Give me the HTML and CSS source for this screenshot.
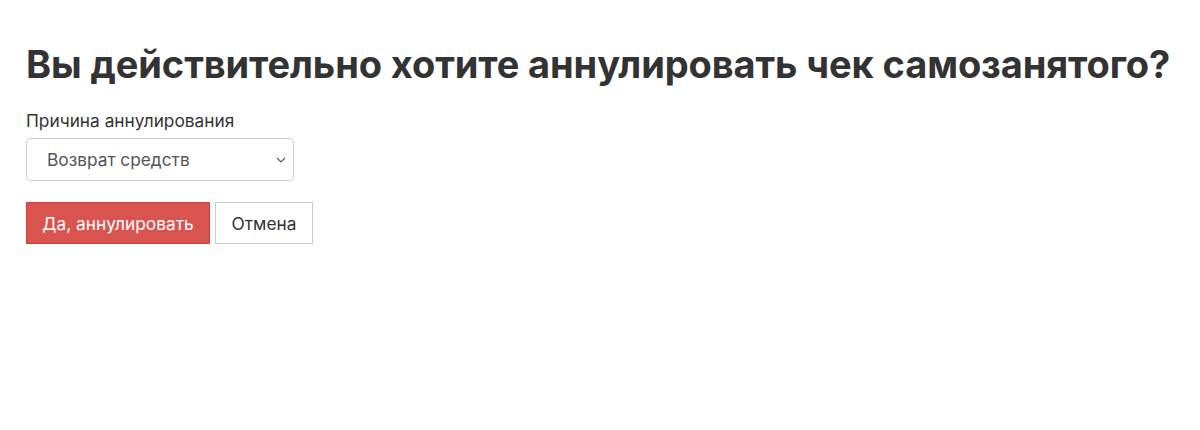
FILE: index.html
```html
<!DOCTYPE html>
<html lang="ru">
<head>
<meta charset="utf-8">
<title>Аннулирование чека</title>
<link rel="stylesheet" href="styles.css">
</head>
<body>
<div class="page">
  <h1 class="title">Вы действительно хотите аннулировать чек самозанятого?</h1>
  <form class="form">
    <label class="label" for="reason">Причина аннулирования</label>
    <div class="select" id="reason">
      <span class="select-value">Возврат средств</span>
      <svg class="chevron" width="10" height="6" viewBox="0 0 10 6"><path d="M1 1l4 4 4-4" fill="none" stroke="#555" stroke-width="1.1"/></svg>
    </div>
    <div class="actions">
      <button type="button" class="btn btn-danger">Да, аннулировать</button>
      <button type="button" class="btn btn-default">Отмена</button>
    </div>
  </form>
</div>
</body>
</html>
```
FILE: styles.css
```css
html, body {
  margin: 0;
  padding: 0;
  background: #fff;
}
body {
  font-family: Inter, "Noto Sans", sans-serif;
  color: #333;
}
.page {
  padding: 40px 26px;
}
.title {
  margin: 0 0 22px 0;
  font-size: 38px;
  font-weight: 700;
  line-height: 48px;
  letter-spacing: -0.1px;
  color: #333;
}
.form {
  display: flex;
  flex-direction: column;
  align-items: flex-start;
}
.label {
  font-size: 17.3px;
  line-height: 22px;
  color: #333;
  margin-bottom: 6px;
}
.select {
  box-sizing: border-box;
  width: 268px;
  height: 43px;
  border: 1px solid #ccc;
  border-radius: 5px;
  display: flex;
  align-items: center;
  justify-content: space-between;
  padding: 0 7px 0 20px;
  font-size: 17.3px;
  color: #555;
}
.actions {
  display: flex;
  gap: 5px;
  margin-top: 21px;
}
.btn {
  box-sizing: border-box;
  height: 42px;
  font-family: inherit;
  font-size: 17.3px;
  padding: 0;
  border: 1px solid #ccc;
  border-radius: 0;
  background: #fff;
  color: #333;
}
.btn-danger {
  background: #d9534f;
  border-color: #d43f3a;
  color: #fff;
  width: 184px;
}
.btn-default {
  width: 98px;
}
```
